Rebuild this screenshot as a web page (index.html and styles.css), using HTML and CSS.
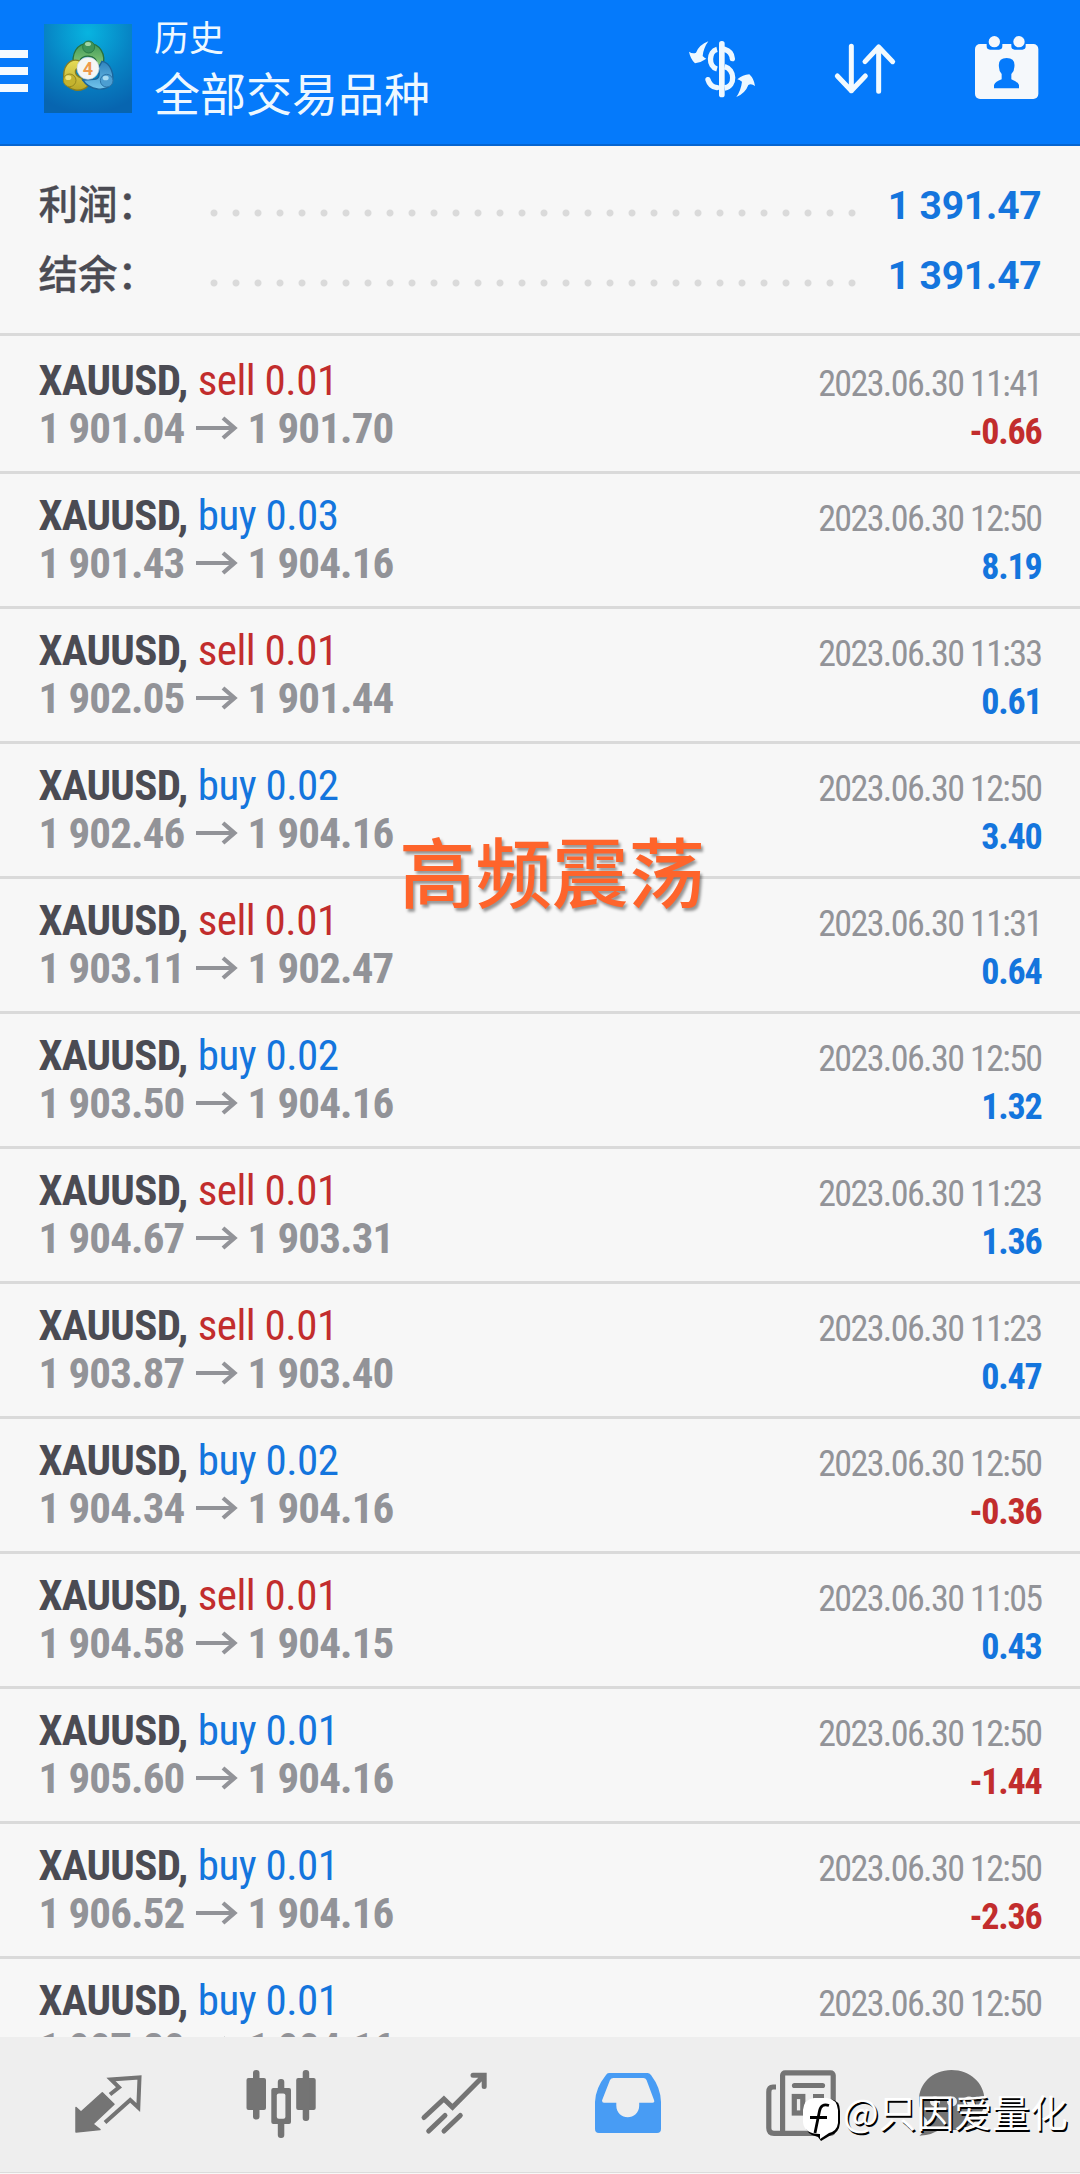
FILE: index.html
```html
<!DOCTYPE html>
<html lang="zh-CN">
<head>
<meta charset="utf-8">
<title>历史</title>
<link rel="stylesheet" href="styles.css">
</head>
<body>
<svg class="defs" aria-hidden="true"><symbol id="arrow" viewBox="0 0 42 24"><path d="M0 12H38M27 2L38.500 12L27 22" fill="none" stroke="#929398" stroke-width="4.200"/></symbol></svg>
<div class="app">
  <header class="topbar">
    <div class="menu"><i></i><i></i><i></i></div>
    <svg class="logo" viewBox="132 72 264 267">
      <defs>
        <radialGradient id="sky" cx=".5" cy=".1" r=".9"><stop offset="0" stop-color="#08b4e0"/><stop offset=".55" stop-color="#0783c4"/><stop offset="1" stop-color="#0765b0"/></radialGradient>
        <linearGradient id="gr" x2="0" y2="1"><stop offset="0" stop-color="#3f9a58"/><stop offset="1" stop-color="#8ecb7c"/></linearGradient>
        <linearGradient id="ye" x2="0" y2="1"><stop offset="0" stop-color="#e6dc58"/><stop offset="1" stop-color="#b9a726"/></linearGradient>
        <linearGradient id="bl" x2="0" y2="1"><stop offset="0" stop-color="#2f83bd"/><stop offset="1" stop-color="#71c3ec"/></linearGradient>
      </defs>
      <path fill="url(#sky)" d="M132 72h264v267H132z"/>
      <path d="M222 200C212 160 232 130 265 130S320 160 308 202L288 190C296 165 240 160 240 185Z" fill="url(#gr)" stroke="#28713f" stroke-width="4"/>
      <path d="M238 182C208 174 186 200 192 240C205 276 244 278 264 258L244 234C222 226 220 206 240 202Z" fill="url(#ye)" stroke="#877d20" stroke-width="4"/>
      <path d="M306 184C332 188 346 226 334 252C316 276 270 272 248 240L282 238C300 238 300 218 294 206Z" fill="url(#bl)" stroke="#1b659b" stroke-width="4"/>
      <circle cx="266" cy="141" r="18" fill="#3f945a" stroke="#2c7c45" stroke-width="3"/><ellipse cx="264" cy="132" rx="9" ry="6" fill="#a3d6a6"/>
      <circle cx="209" cy="241" r="19" fill="#c4b32e" stroke="#968a20" stroke-width="3"/><ellipse cx="205" cy="233" rx="9" ry="7" fill="#eee580"/>
      <circle cx="320" cy="242" r="19" fill="#4c9ed2" stroke="#2d75a9" stroke-width="3"/><ellipse cx="317" cy="234" rx="9" ry="7" fill="#a7dbf2"/>
      <circle cx="264" cy="205" r="33" fill="#f5f6f4" stroke="#c8d5d8" stroke-width="2"/>
      <text x="264" y="226" text-anchor="middle" class="four">4</text>
    </svg>
    <div class="titles"><div class="t1">历史</div><div class="t2">全部交易品种</div></div>
    <div class="actions">
      <svg width="68" height="66" viewBox="84 102 204 198"><rect x="177" y="123" width="17" height="169" rx="8" fill="#eef8ff"/>
        <g fill="none" stroke="#eef8ff" stroke-width="16"><path d="M171 148C146 154 144 200 171 207"/><path d="M194 148Q215 154 217 176" stroke-linecap="round"/><path d="M194 200C224 208 228 258 194 264"/><path d="M144 239Q150 260 171 263" stroke-linecap="round"/></g>
        <path fill="#eef8ff" d="M87 155Q98 163 108 158Q118 134 145 124Q130 145 128 168Q134 174 139 176Q122 188 105 190Q91 176 87 155ZM285 258Q274 250 265 255Q256 280 229 291Q243 270 246 245Q238 239 232 238Q248 224 268 223Q282 236 285 258Z"/></svg>
      <svg width="66" height="58" viewBox="516 114 198 174"><path d="M574 139V272M532 228L574 272L616 228M656 274V141M615 185L656 141L698 185" fill="none" stroke="#f2faff" stroke-width="15" stroke-linecap="round" stroke-linejoin="round"/></svg>
      <svg width="66" height="66" viewBox="942 102 198 198"><rect x="945" y="132" width="190" height="165" rx="15" fill="#f5f8fb"/><path d="M980 130V139Q980 149 990 149H1017Q1027 149 1027 139V130ZM1054 130V139Q1054 149 1064 149H1087Q1097 149 1097 139V130Z" fill="#057afb"/><g fill="#f5f8fb"><circle cx="1003" cy="125" r="17"/><circle cx="1077" cy="125" r="17"/></g><path fill="#057afb" d="M1002 265V255Q1006 245 1025 238V222Q1017 214 1017 202Q1013 174 1040 174Q1067 174 1063 202Q1063 214 1054 222V238Q1073 245 1077 255V265Z"/></svg>
    </div>
  </header>
  <section class="summary">
    <div class="sum"><span class="label">利润：</span><span class="dots"></span><span class="total">1 391.47</span></div>
    <div class="sum"><span class="label">结余：</span><span class="dots"></span><span class="total">1 391.47</span></div>
  </section>
  <main class="list">
    <div class="row"><div class="deal"><div class="sym"><b>XAUUSD,</b> <span class="sell">sell 0.01</span></div><div class="price">1 901.04<svg><use href="#arrow"/></svg>1 901.70</div></div><div class="result"><div class="date">2023.06.30 11:41</div><div class="pl sell">-0.66</div></div></div>
    <div class="row"><div class="deal"><div class="sym"><b>XAUUSD,</b> <span class="buy">buy 0.03</span></div><div class="price">1 901.43<svg><use href="#arrow"/></svg>1 904.16</div></div><div class="result"><div class="date">2023.06.30 12:50</div><div class="pl buy">8.19</div></div></div>
    <div class="row"><div class="deal"><div class="sym"><b>XAUUSD,</b> <span class="sell">sell 0.01</span></div><div class="price">1 902.05<svg><use href="#arrow"/></svg>1 901.44</div></div><div class="result"><div class="date">2023.06.30 11:33</div><div class="pl buy">0.61</div></div></div>
    <div class="row"><div class="deal"><div class="sym"><b>XAUUSD,</b> <span class="buy">buy 0.02</span></div><div class="price">1 902.46<svg><use href="#arrow"/></svg>1 904.16</div></div><div class="result"><div class="date">2023.06.30 12:50</div><div class="pl buy">3.40</div></div></div>
    <div class="row"><div class="deal"><div class="sym"><b>XAUUSD,</b> <span class="sell">sell 0.01</span></div><div class="price">1 903.11<svg><use href="#arrow"/></svg>1 902.47</div></div><div class="result"><div class="date">2023.06.30 11:31</div><div class="pl buy">0.64</div></div></div>
    <div class="row"><div class="deal"><div class="sym"><b>XAUUSD,</b> <span class="buy">buy 0.02</span></div><div class="price">1 903.50<svg><use href="#arrow"/></svg>1 904.16</div></div><div class="result"><div class="date">2023.06.30 12:50</div><div class="pl buy">1.32</div></div></div>
    <div class="row"><div class="deal"><div class="sym"><b>XAUUSD,</b> <span class="sell">sell 0.01</span></div><div class="price">1 904.67<svg><use href="#arrow"/></svg>1 903.31</div></div><div class="result"><div class="date">2023.06.30 11:23</div><div class="pl buy">1.36</div></div></div>
    <div class="row"><div class="deal"><div class="sym"><b>XAUUSD,</b> <span class="sell">sell 0.01</span></div><div class="price">1 903.87<svg><use href="#arrow"/></svg>1 903.40</div></div><div class="result"><div class="date">2023.06.30 11:23</div><div class="pl buy">0.47</div></div></div>
    <div class="row"><div class="deal"><div class="sym"><b>XAUUSD,</b> <span class="buy">buy 0.02</span></div><div class="price">1 904.34<svg><use href="#arrow"/></svg>1 904.16</div></div><div class="result"><div class="date">2023.06.30 12:50</div><div class="pl sell">-0.36</div></div></div>
    <div class="row"><div class="deal"><div class="sym"><b>XAUUSD,</b> <span class="sell">sell 0.01</span></div><div class="price">1 904.58<svg><use href="#arrow"/></svg>1 904.15</div></div><div class="result"><div class="date">2023.06.30 11:05</div><div class="pl buy">0.43</div></div></div>
    <div class="row"><div class="deal"><div class="sym"><b>XAUUSD,</b> <span class="buy">buy 0.01</span></div><div class="price">1 905.60<svg><use href="#arrow"/></svg>1 904.16</div></div><div class="result"><div class="date">2023.06.30 12:50</div><div class="pl sell">-1.44</div></div></div>
    <div class="row"><div class="deal"><div class="sym"><b>XAUUSD,</b> <span class="buy">buy 0.01</span></div><div class="price">1 906.52<svg><use href="#arrow"/></svg>1 904.16</div></div><div class="result"><div class="date">2023.06.30 12:50</div><div class="pl sell">-2.36</div></div></div>
    <div class="row"><div class="deal"><div class="sym"><b>XAUUSD,</b> <span class="buy">buy 0.01</span></div><div class="price">1 907.20<svg><use href="#arrow"/></svg>1 904.16</div></div><div class="result"><div class="date">2023.06.30 12:50</div></div></div>
  </main>
  <nav class="tabs">
    <a><svg viewBox="0 0 72 80"><path fill="#747474" stroke="#747474" stroke-width="1.500" stroke-linejoin="round" d="M4 47.500L9 52L30.300 32.700L42 44.300L21 64L28 69.500L4 72Z"/><path fill="none" stroke="#747474" stroke-width="4" d="M33 62.500L58.200 40L66.300 47.500L67.500 17.500L39 19.500L47 27.300L38 34.500"/></svg></a>
    <a><svg viewBox="0 0 72 80"><g fill="#747474"><rect x="1.500" y="18" width="19.500" height="32" rx="2"/><rect x="8" y="10" width="6.500" height="49.500" rx="3"/><rect x="51.200" y="18" width="19.500" height="32" rx="2"/><rect x="57.700" y="10" width="6.500" height="51" rx="3"/><rect x="32.800" y="19" width="6.500" height="59" rx="3"/><rect x="26.300" y="28" width="19.700" height="36" rx="2"/></g><rect x="31.800" y="33.500" width="8.600" height="25.200" rx="2" fill="#eeeeee"/></svg></a>
    <a><svg viewBox="0 0 72 80"><path fill="none" stroke="#747474" stroke-width="5" stroke-linecap="round" d="M6 57.500L25.900 39L34.500 47.300L65.500 16M55 15.300H66.200V26.500M10.700 71L27 55.500M26 71L42.300 55.500"/></svg></a>
    <a><svg viewBox="0 0 72 80"><path fill="#489cf4" fill-rule="evenodd" d="M14 15Q15 13 17 13H55.500Q57.500 13 59 15Q68.800 28 69 42V69Q69 73 65 73H7Q3 73 3 69V42Q3.500 28 14 15ZM18 20L10 40.500Q10 42.700 12 42.700H24.300V45.500C24.300 61 47.200 61 47.200 45.500V42.700H60.500Q63 42.700 62 40L54.500 20Q53.500 18 51.500 18H21.500Q19 18 18 20Z"/></svg></a>
    <a><svg viewBox="0 0 72 80"><g fill="none" stroke="#747474" stroke-width="5.200"><rect x="17.600" y="12.800" width="50.600" height="60.500" rx="2.500"/><path d="M11 27H8Q3.800 27 3.800 32V68Q3.800 73.300 9 73.300H20"/><path d="M29.500 25.500H57.500" stroke-linecap="round"/><rect x="29.300" y="36.500" width="8.500" height="16.500"/><path d="M48 36.500H59M48 45H59"/></g></svg></a>
    <a><svg viewBox="0 0 72 80"><path fill="#747474" d="M35.500 10C16 10 3 24 3 40Q3 53 11 60Q14 67 3.500 75.700Q17 75 25 68.500C49 75 68.500 60 68.500 40C68.500 23 54 10 35.500 10Z"/><g fill="#eeeeee"><circle cx="19" cy="41.500" r="5"/><circle cx="36" cy="41.500" r="5"/><circle cx="53" cy="41.500" r="5"/></g></svg></a>
  </nav>
  <div class="caption">高频震荡</div>
  <div class="watermark"><svg width="42" height="46" viewBox="0 0 42 46"><path fill="#000" d="M14 2H29Q39 3 39 14V26Q38 36 30 38L20 44L17 40Q5 38 4 27V14Q5 3 14 2Z"/><path fill="#fff" d="M13 1H26Q36 2 37 13V26Q36 34 28 36L19 42V37Q3 37 2 25V13Q3 2 13 1Z"/><path d="M28 8.500Q20 6 18.500 14L14 36M9 20.500H26" fill="none" stroke="#000" stroke-width="2.800"/></svg><span>@只因爱量化</span></div>
</div>
</body>
</html>
```

FILE: styles.css
```css
* { box-sizing: border-box; }
body { margin: 0; background: #f7f7f7; }
.defs { position: absolute; width: 0; height: 0; }
.app {
  position: relative;
  display: flex;
  flex-direction: column;
  width: 1080px;
  height: 2174px;
  overflow: hidden;
  font-family: "Roboto Condensed", Roboto, "Noto Sans CJK SC", sans-serif;
  font-stretch: 75%;
}
.topbar {
  flex: none;
  display: flex;
  align-items: flex-start;
  height: 146px;
  background: #057afb;
  border-bottom: 2px solid #0765d0;
}
.menu { display: flex; flex-direction: column; gap: 9px; width: 28px; margin-top: 50px; }
.menu i { height: 8px; background: #f4faff; }
.logo { width: 88px; height: 89px; margin: 24px 0 0 16px; }
.four { font: bold 54px "Roboto", sans-serif; fill: #ee9a4c; }
.titles { margin: 11px 0 0 22px; color: #eef8ff; font-family: "Noto Sans CJK SC", sans-serif; white-space: nowrap; }
.t1 { font-size: 35px; line-height: 50px; }
.t2 { font-size: 46px; line-height: 60px; }
.actions { display: flex; align-items: center; gap: 76px; height: 134px; margin-left: auto; padding-right: 40px; }
.summary { flex: none; height: 190px; padding: 24px 38.500px 0; border-bottom: 3px solid #dadada; }
.sum { display: flex; align-items: center; height: 70px; }
.label {
  width: 171.500px;
  margin-top: -6px;
  font: 500 39.500px/60px "Noto Sans CJK SC", sans-serif;
  color: #4b4b53;
  -webkit-text-stroke: .3px #4b4b53;
}
.dots {
  width: 660px;
  height: 8px;
  margin-top: 15px;
  margin-left: -7px;
  background: radial-gradient(circle at 11px 4px, #dadada 3px, transparent 4px) 0 0 / 22px 8px;
}
.total { flex: 1; margin-top: 2px; text-align: right; font: 700 39px/60px Roboto, sans-serif; font-stretch: 100%; letter-spacing: -.2px; color: #1475dd; white-space: nowrap; }
.list { flex: 1; min-height: 0; overflow: hidden; padding-top: 3px; }
.row {
  display: flex;
  justify-content: space-between;
  height: 135px;
  padding: 17px 38.500px 0 38.500px;
  border-bottom: 3px solid #dadada;
  white-space: nowrap;
}
.sym, .price { font-size: 43px; line-height: 48px; letter-spacing: -.7px; }
.sym { color: #4b4b53; }
.sym span { margin-left: 1px; letter-spacing: -.5px; }
.price { display: flex; align-items: center; font-weight: 700; letter-spacing: -.850px; color: #929398; }
.price svg { width: 42px; height: 24px; margin: 0 9.500px 0 11.500px; }
.sell { color: #c22d2d; }
.buy { color: #1475dd; }
.result { padding-top: 4px; text-align: right; font-size: 36px; line-height: 48px; }
.date { color: #929398; letter-spacing: -1.600px; }
.pl { font-weight: 700; letter-spacing: -1.200px; }
.tabs {
  flex: none;
  display: flex;
  align-items: flex-start;
  height: 137px;
  padding: 23px 0 0 21.500px;
  background: linear-gradient(#eeeeee 135px, #dcdcdc 135px, #dcdcdc 136px, #f8f8f8 136px);
}
.tabs a { flex: none; display: flex; justify-content: center; width: 173.200px; }
.tabs a:last-child { width: 130px; }
.tabs svg { width: 72px; height: 80px; }
.caption {
  position: absolute;
  left: 399px;
  top: 814px;
  font: 500 76.500px/110px "Noto Sans CJK SC", sans-serif;
  color: #fe642b;
  text-shadow: 2px 3px 3px rgba(0, 0, 0, .4);
  white-space: nowrap;
}
.watermark {
  position: absolute;
  left: 801px;
  top: 2078px;
  display: flex;
  align-items: center;
  color: #fff;
  font: 400 37.800px/56px "Noto Sans CJK SC", sans-serif;
  text-shadow: 1.500px 1.500px 0 #000;
  white-space: nowrap;
}
.watermark svg { margin-top: 19px; }
```
